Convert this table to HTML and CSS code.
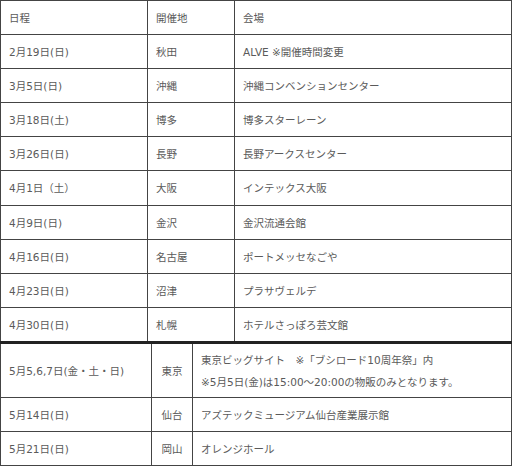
FILE: index.html
```html
<!DOCTYPE html>
<html lang="ja">
<head>
<meta charset="utf-8">
<link rel="stylesheet" href="styles.css">
</head>
<body>
<table class="sched sched-main">
  <colgroup><col class="c1"><col class="c2"><col class="c3"></colgroup>
  <tr><td>日程</td><td>開催地</td><td>会場</td></tr>
  <tr><td>2月19日(日)</td><td>秋田</td><td>ALVE ※開催時間変更</td></tr>
  <tr><td>3月5日(日)</td><td>沖縄</td><td>沖縄コンベンションセンター</td></tr>
  <tr><td>3月18日(土)</td><td>博多</td><td>博多スターレーン</td></tr>
  <tr><td>3月26日(日)</td><td>長野</td><td>長野アークスセンター</td></tr>
  <tr class="x"><td>4月1日（土）</td><td>大阪</td><td>インテックス大阪</td></tr>
  <tr><td>4月9日(日)</td><td>金沢</td><td>金沢流通会館</td></tr>
  <tr><td>4月16日(日)</td><td>名古屋</td><td>ポートメッセなごや</td></tr>
  <tr><td>4月23日(日)</td><td>沼津</td><td>プラサヴェルデ</td></tr>
  <tr><td>4月30日(日)</td><td>札幌</td><td>ホテルさっぽろ芸文館</td></tr>
</table>
<table class="sched sched-sub">
  <colgroup><col class="d1"><col class="d2"><col class="d3"></colgroup>
  <tr class="tall"><td>5月5,6,7日(金・土・日)</td><td class="center">東京</td><td>東京ビッグサイト　※「ブシロード10周年祭」内<br>※5月5日(金)は15:00～20:00の物販のみとなります。</td></tr>
  <tr><td>5月14日(日)</td><td class="center">仙台</td><td>アズテックミュージアム仙台産業展示館</td></tr>
  <tr><td>5月21日(日)</td><td class="center">岡山</td><td>オレンジホール</td></tr>
</table>
</body>
</html>
```

FILE: styles.css
```css
html, body {
  margin: 0;
  padding: 0;
  background: #fff;
}
body {
  font-family: "DejaVu Sans", "Noto Sans CJK JP", sans-serif;
  font-size: 10.5px;
  color: #5a5a5a;
}
.sched {
  border-collapse: collapse;
  width: 512px;
  table-layout: fixed;
}
.sched td {
  border: 1px solid #444;
  padding: 0 0 0 8px;
  height: 33px;
  vertical-align: middle;
  white-space: nowrap;
  line-height: 22px;
}
.sched tr.x td {
  height: 34px;
}
.c1 { width: 147px; }
.c2 { width: 87px; }
.c3 { width: auto; }
.d1 { width: 151px; }
.d2 { width: 41px; }
.d3 { width: auto; }
.sched-sub {
  border-top: 2px solid #222;
}
.sched-sub td.center {
  text-align: center;
  padding: 0;
}
.sched-sub tr.tall td {
  height: 53px;
}
.sched-main tr:last-child td { border-bottom-color: #222; }
```
